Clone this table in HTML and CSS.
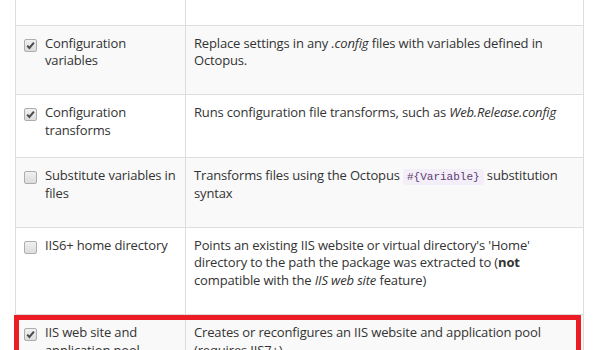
FILE: index.html
```html
<!DOCTYPE html>
<html>
<head>
<meta charset="utf-8">
<link rel="stylesheet" href="styles.css">
</head>
<body>
<div class="viewport">
  <div class="features">
    <div class="row">
      <div class="cell name"><span class="cb checked"><svg viewBox="0 0 11 11"><path d="M2.2 5.6 L4.4 7.9 L8.9 2.6" /></svg></span><span class="label">Custom deployment scripts</span></div>
      <div class="cell desc">Run deployment scripts before, during, and after the package is deployed</div>
    </div>
    <div class="row striped">
      <div class="cell name"><span class="cb checked"><svg viewBox="0 0 11 11"><path d="M2.2 5.6 L4.4 7.9 L8.9 2.6" /></svg></span><span class="label">Configuration variables</span></div>
      <div class="cell desc">Replace settings in any <em>.config</em> files with variables defined in Octopus.</div>
    </div>
    <div class="row">
      <div class="cell name"><span class="cb checked"><svg viewBox="0 0 11 11"><path d="M2.2 5.6 L4.4 7.9 L8.9 2.6" /></svg></span><span class="label">Configuration transforms</span></div>
      <div class="cell desc">Runs configuration file transforms, such as <em>Web.Release.config</em></div>
    </div>
    <div class="row striped">
      <div class="cell name"><span class="cb"></span><span class="label">Substitute variables in files</span></div>
      <div class="cell desc">Transforms files using the Octopus <code>#{Variable}</code> substitution syntax</div>
    </div>
    <div class="row">
      <div class="cell name"><span class="cb"></span><span class="label">IIS6+ home directory</span></div>
      <div class="cell desc">Points an existing IIS website or virtual directory's 'Home' directory to the path the package was extracted to (<strong>not</strong> compatible with the <em>IIS web site</em> feature)</div>
    </div>
    <div class="row striped">
      <div class="cell name"><span class="cb checked"><svg viewBox="0 0 11 11"><path d="M2.2 5.6 L4.4 7.9 L8.9 2.6" /></svg></span><span class="label">IIS web site and application pool</span></div>
      <div class="cell desc">Creates or reconfigures an IIS website and application pool (requires IIS7+)</div>
    </div>
  </div>
  <div class="highlight"></div>
</div>
</body>
</html>
```
FILE: styles.css
```css
html, body {
  margin: 0;
  padding: 0;
  background: #fff;
}
body {
  font-family: "Open Sans", "Noto Sans", sans-serif;
  font-size: 13px;
  line-height: 1.37;
  letter-spacing: -0.15px;
  color: #333;
  overflow: hidden;
}
.viewport {
  position: relative;
  width: 600px;
  height: 350px;
  overflow: hidden;
}
.features {
  margin-left: 15px;
  margin-top: -44px;
  width: 568px;
  border-left: 1px solid #ddd;
}
.row {
  display: flex;
  border-bottom: 1px solid #ddd;
  background: #fff;
}
.row.striped {
  background: #f9f9f9;
}
.cell {
  box-sizing: border-box;
  border-right: 1px solid #ddd;
  padding: 9px 8px 24px 8px;
}
.cell.name {
  width: 170px;
  display: flex;
  align-items: flex-start;
  gap: 8px;
  padding-bottom: 17px;
}
.cell.desc {
  width: 398px;
}
.cb {
  flex: none;
  box-sizing: border-box;
  width: 13px;
  height: 13px;
  margin-top: 4px;
  border: 1px solid #adadad;
  border-radius: 2px;
  background: linear-gradient(#f0f0f0, #dcdcdc);
  display: flex;
}
.cb svg {
  width: 11px;
  height: 11px;
}
.cb path {
  fill: none;
  stroke: #4a4a4a;
  stroke-width: 2;
}
.label {
  flex: 1;
}
em {
  font-style: italic;
}
strong {
  font-weight: 700;
}
code {
  font-family: "Liberation Mono", "DejaVu Sans Mono", monospace;
  font-size: 11px;
  letter-spacing: 0;
  color: #5b3b73;
  background: #f4eef8;
  border-radius: 3px;
  padding: 2px 4px;
}
.highlight {
  position: absolute;
  left: 14px;
  top: 315px;
  width: 567px;
  height: 60px;
  box-sizing: border-box;
  border: 5px solid #ec1c24;
}
```
